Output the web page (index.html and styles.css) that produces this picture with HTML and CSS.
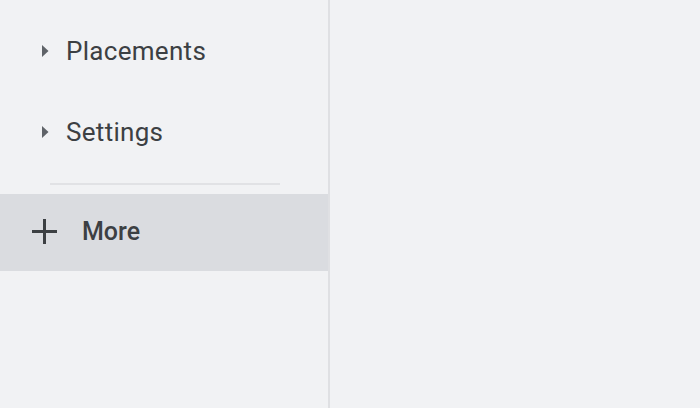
FILE: index.html
```html
<!DOCTYPE html>
<html>
<head>
<meta charset="utf-8">
<link rel="stylesheet" href="styles.css">
</head>
<body>
<div class="page">
  <nav class="sidebar">
    <div class="item">
      <svg class="caret" width="7" height="12" viewBox="0 0 7 12"><path d="M0 0 L6.5 6 L0 12 Z" fill="#5f6368"/></svg>
      <span class="label">Placements</span>
    </div>
    <div class="item">
      <svg class="caret" width="7" height="12" viewBox="0 0 7 12"><path d="M0 0 L6.5 6 L0 12 Z" fill="#5f6368"/></svg>
      <span class="label">Settings</span>
    </div>
    <div class="divider"></div>
    <div class="more">
      <svg class="plus" width="25" height="25" viewBox="0 0 25 25"><path d="M12.5 0 V25 M0 12.5 H25" stroke="#3c4043" stroke-width="3"/></svg>
      <span class="more-label">More</span>
    </div>
  </nav>
  <main class="content"></main>
</div>
</body>
</html>
```

FILE: styles.css
```css
html, body {
  margin: 0;
  padding: 0;
  background: #f1f2f4;
}
.page {
  display: flex;
  width: 700px;
  height: 408px;
  font-family: Roboto, "Liberation Sans", sans-serif;
}
.sidebar {
  width: 328px;
  flex: none;
  border-right: 2px solid #dfe0e3;
  padding-top: 12px;
  box-sizing: content-box;
}
.item {
  height: 81px;
  box-sizing: border-box;
  padding-bottom: 3px;
  display: flex;
  align-items: center;
  padding-left: 42px;
}
.caret {
  flex: none;
  margin-right: 17px;
}
.label {
  font-size: 26px;
  color: #3c4043;
  letter-spacing: 0.3px;
}
.divider {
  height: 2px;
  background: #e1e2e5;
  margin: 9px 48px 9px 50px;
}
.more {
  height: 77px;
  box-sizing: border-box;
  padding-bottom: 2px;
  background: #dadce0;
  display: flex;
  align-items: center;
  padding-left: 32px;
}
.plus {
  flex: none;
  margin-right: 25px;
}
.more-label {
  font-size: 25px;
  font-weight: 500;
  color: #3c4043;
}
.content {
  flex: 1;
}
```
